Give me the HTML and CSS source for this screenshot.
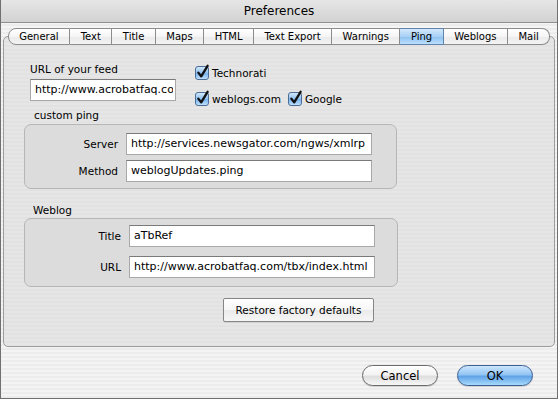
FILE: index.html
```html
<!DOCTYPE html>
<html>
<head>
<meta charset="utf-8">
<title>Preferences</title>
<link rel="stylesheet" href="styles.css">
</head>
<body>
<div class="window">
  <div class="titlebar">Preferences</div>
  <div class="tabs">
    <div class="tab first">General</div>
    <div class="tab">Text</div>
    <div class="tab">Title</div>
    <div class="tab">Maps</div>
    <div class="tab">HTML</div>
    <div class="tab">Text Export</div>
    <div class="tab">Warnings</div>
    <div class="tab selected">Ping</div>
    <div class="tab">Weblogs</div>
    <div class="tab last">Mail</div>
  </div>
  <div class="pane">
    <div class="top-row">
      <div class="feed-col">
        <div class="label">URL of your feed</div>
        <input class="field feed-field" type="text" value="http://www.acrobatfaq.co">
      </div>
      <div class="checks">
        <div class="check-row">
          <span class="check">
            <svg class="cb" width="15" height="16" viewBox="0 0 15 16"><defs><linearGradient id="cb1" x1="0" y1="0" x2="0" y2="1"><stop offset="0" stop-color="#d8ecfc"/><stop offset="0.5" stop-color="#8ec0ef"/><stop offset="0.55" stop-color="#78b2ec"/><stop offset="1" stop-color="#c6e6ff"/></linearGradient></defs><rect x="0.5" y="2.5" width="13" height="13" rx="2.5" fill="url(#cb1)" stroke="#4c6d96"/><path d="M3.3 8.6 L6.2 12.4 L12.6 1.8" fill="none" stroke="#111" stroke-width="2.3" stroke-linecap="round" stroke-linejoin="round"/></svg>
            <span>Technorati</span>
          </span>
        </div>
        <div class="check-row">
          <span class="check">
            <svg class="cb" width="15" height="16" viewBox="0 0 15 16"><defs><linearGradient id="cb2" x1="0" y1="0" x2="0" y2="1"><stop offset="0" stop-color="#d8ecfc"/><stop offset="0.5" stop-color="#8ec0ef"/><stop offset="0.55" stop-color="#78b2ec"/><stop offset="1" stop-color="#c6e6ff"/></linearGradient></defs><rect x="0.5" y="2.5" width="13" height="13" rx="2.5" fill="url(#cb2)" stroke="#4c6d96"/><path d="M3.3 8.6 L6.2 12.4 L12.6 1.8" fill="none" stroke="#111" stroke-width="2.3" stroke-linecap="round" stroke-linejoin="round"/></svg>
            <span>weblogs.com</span>
          </span>
          <span class="check">
            <svg class="cb" width="15" height="16" viewBox="0 0 15 16"><defs><linearGradient id="cb3" x1="0" y1="0" x2="0" y2="1"><stop offset="0" stop-color="#d8ecfc"/><stop offset="0.5" stop-color="#8ec0ef"/><stop offset="0.55" stop-color="#78b2ec"/><stop offset="1" stop-color="#c6e6ff"/></linearGradient></defs><rect x="0.5" y="2.5" width="13" height="13" rx="2.5" fill="url(#cb3)" stroke="#4c6d96"/><path d="M3.3 8.6 L6.2 12.4 L12.6 1.8" fill="none" stroke="#111" stroke-width="2.3" stroke-linecap="round" stroke-linejoin="round"/></svg>
            <span>Google</span>
          </span>
        </div>
      </div>
    </div>

    <div class="group-title">custom ping</div>
    <div class="group group-ping">
      <span class="row-label">Server</span>
      <input class="field" type="text" value="http://services.newsgator.com/ngws/xmlrp">
      <span class="row-label">Method</span>
      <input class="field" type="text" value="weblogUpdates.ping">
    </div>

    <div class="group-title weblog-title">Weblog</div>
    <div class="group group-weblog">
      <span class="row-label">Title</span>
      <input class="field" type="text" value="aTbRef">
      <span class="row-label">URL</span>
      <input class="field" type="text" value="http://www.acrobatfaq.com/tbx/index.html">
    </div>

    <button class="restore" type="button">Restore factory defaults</button>
  </div>
  <div class="actions">
    <button class="pill cancel" type="button">Cancel</button>
    <button class="pill ok" type="button">OK</button>
  </div>
</div>
</body>
</html>
```
FILE: styles.css
```css
html, body {
  margin: 0;
  padding: 0;
  background: #ffffff;
}

.window {
  width: 558px;
  height: 399px;
  box-sizing: border-box;
  border: 1px solid #707070;
  border-top: none;
  background: repeating-linear-gradient(to bottom, #ececec 0 2px, #f4f4f4 2px 4px);
  font-family: "DejaVu Sans", sans-serif;
  color: #000;
  overflow: hidden;
}

.titlebar {
  height: 23px;
  box-sizing: border-box;
  padding-top: 1px;
  border-bottom: 1px solid #8f8f8f;
  background: linear-gradient(#e6e6e6, #d2d2d2);
  text-align: center;
  font-size: 12px;
  line-height: 21px;
}

.tabs {
  display: flex;
  justify-content: center;
  margin-top: 5px;
  position: relative;
  z-index: 1;
}

.tab {
  height: 17px;
  box-sizing: border-box;
  border: 1px solid #8c8c8c;
  border-left: none;
  padding: 0 10.5px;
  font-size: 10px;
  line-height: 15px;
  white-space: nowrap;
  background: linear-gradient(#ffffff, #f5f5f5 50%, #ebebeb 52%, #f3f3f3);
}

.tab.first {
  border-left: 1px solid #8c8c8c;
  border-radius: 8px 0 0 8px;
}

.tab.last {
  border-radius: 0 8px 8px 0;
}

.tab.selected {
  background: linear-gradient(#d3e8fc, #a8d0f5 50%, #8cc1f1 52%, #bde0fd);
  border-color: #5f83ad;
}

.pane {
  margin: -9px 2px 0;
  height: 311px;
  box-sizing: border-box;
  border: 1px solid #9c9c9c;
  border-radius: 5px;
  background: repeating-linear-gradient(to bottom, #e2e2e2 0 2px, #e6e6e6 2px 4px);
  padding-top: 25px;
}

.top-row {
  display: flex;
  align-items: flex-start;
  padding-left: 26px;
}

.feed-col {
  width: 146px;
}

.label {
  font-size: 10.5px;
  line-height: 14px;
  white-space: nowrap;
}

.field {
  display: block;
  box-sizing: border-box;
  height: 22px;
  width: 246px;
  margin: 0;
  padding: 0 2px 2px 4px;
  border: 1px solid #a8a8a8;
  border-top-color: #7a7a7a;
  border-radius: 0;
  background: #ffffff;
  font: 11px "DejaVu Sans", sans-serif;
  color: #000;
  outline: none;
}

.feed-field {
  width: 146px;
  margin-top: 3px;
}

.checks {
  margin-left: 19px;
  padding-top: 2px;
  display: flex;
  flex-direction: column;
  gap: 10px;
}

.check-row {
  display: flex;
  align-items: center;
  gap: 7px;
  height: 16px;
}

.check {
  display: flex;
  align-items: center;
  gap: 2px;
  font-size: 10.5px;
  line-height: 14px;
  white-space: nowrap;
}

.check span {
  padding-top: 2px;
}

.cb {
  display: block;
  flex: none;
}

.group-title {
  font-size: 10.5px;
  line-height: 14px;
  margin-top: 2px;
  padding-left: 30px;
}

.group {
  margin-left: 20px;
  box-sizing: border-box;
  border: 1px solid #b6b6b6;
  border-radius: 7px;
  background: #dcdcdc;
  display: grid;
  align-items: center;
}

.group-ping {
  width: 373px;
  margin-top: 2px;
  padding: 8px 0 6px;
  grid-template-columns: 93px 246px;
  column-gap: 8px;
  row-gap: 5px;
}

.weblog-title {
  margin-top: 14px;
  padding-left: 29px;
}

.group-weblog {
  width: 374px;
  margin-top: 1px;
  padding: 6px 0 8px;
  grid-template-columns: 96px 246px;
  column-gap: 8px;
  row-gap: 9px;
}

.row-label {
  text-align: right;
  font-size: 10.5px;
  line-height: 14px;
  white-space: nowrap;
}

.restore {
  display: block;
  margin: 11px 0 0 219px;
  width: 151px;
  height: 24px;
  padding: 0;
  border: 1px solid #868686;
  border-radius: 2px;
  background: linear-gradient(#ffffff, #f6f6f6 50%, #ebebeb 52%, #f6f6f6);
  box-shadow: 0 1px 0 rgba(0, 0, 0, 0.08);
  font: 10.5px "DejaVu Sans", sans-serif;
  color: #000;
}

.actions {
  display: flex;
  justify-content: flex-end;
  gap: 19px;
  padding-right: 24px;
  margin-top: 18px;
}

.pill {
  width: 76px;
  height: 21px;
  padding: 0;
  border: 1px solid #6a6a6a;
  border-radius: 11px;
  font: 11.5px "DejaVu Sans", sans-serif;
  color: #000;
  box-shadow: 0 1px 1px rgba(0, 0, 0, 0.15);
}

.cancel {
  background: linear-gradient(#ffffff, #f3f3f3 45%, #dedede 55%, #f7f7f7);
}

.ok {
  border-color: #3d5f92;
  background: linear-gradient(#cde6fc, #92c5f3 45%, #62a3e8 55%, #a6dbfc);
}
```
